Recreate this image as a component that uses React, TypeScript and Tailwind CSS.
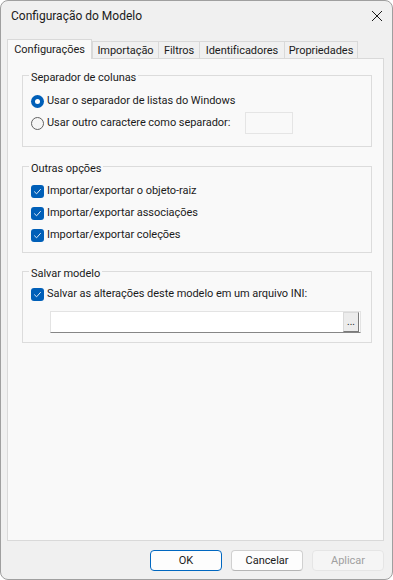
import React from "react";

type Tab = { label: string; width: string; active?: boolean };

const tabs: Tab[] = [
  { label: "Configurações", width: "w-[85px]", active: true },
  { label: "Importação", width: "w-[67px]" },
  { label: "Filtros", width: "w-[42px]" },
  { label: "Identificadores", width: "w-[86px]" },
  { label: "Propriedades", width: "w-[74px]" },
];

function Radio({ checked }: { checked?: boolean }) {
  if (checked) {
    return (
      <span className="flex h-[13px] w-[13px] shrink-0 items-center justify-center rounded-full bg-[#005fb8]">
        <span className="h-[5px] w-[5px] rounded-full bg-white" />
      </span>
    );
  }
  return <span className="h-[13px] w-[13px] shrink-0 rounded-full border border-[#626262] bg-[#f5f5f5]" />;
}

function Check() {
  return (
    <span className="flex h-[13px] w-[13px] shrink-0 items-center justify-center rounded-[3px] bg-[#005fb8]">
      <svg width="9" height="9" viewBox="0 0 9 9" fill="none">
        <path d="M1.5 4.8 L3.6 6.8 L7.5 2.4" stroke="#dbe9f7" strokeWidth="1" strokeLinecap="round" strokeLinejoin="round" />
      </svg>
    </span>
  );
}

function Group({ title, className, children }: { title: string; className: string; children: React.ReactNode }) {
  return (
    <fieldset className={`border border-[#dcdcdc] px-[8px] ${className}`}>
      <legend className="ml-[-2px] px-[2px] pt-[5px] leading-[16px]">{title}</legend>
      {children}
    </fieldset>
  );
}

export default function App() {
  return (
    <div
      className="flex h-[580px] w-[393px] flex-col overflow-hidden rounded-[8px] border border-[#9f9f9f] bg-[#f0f0f0] text-[11px] leading-[16px] tracking-[-0.05px] text-[#1b1b1b]"
      style={{ fontFamily: "Roboto, 'Noto Sans', sans-serif" }}
    >
      <div className="flex h-[30px] shrink-0 items-center justify-between pl-[10px] pr-[9px]">
        <span className="text-[12px] tracking-normal">Configuração do Modelo</span>
        <svg width="12" height="12" viewBox="0 0 12 12">
          <path d="M1 1 L11 11 M11 1 L1 11" stroke="#1b1b1b" strokeWidth="1" />
        </svg>
      </div>

      <div className="flex flex-1 flex-col pl-[6px] pr-[8px] pt-[8px]">
        <div className="flex h-[19px] items-end">
          {tabs.map((t, i) =>
            t.active ? (
              <div
                key={t.label}
                className={`relative z-10 mb-[-1px] flex h-[20px] items-start justify-center whitespace-nowrap border border-b-0 border-[#d9d9d9] bg-[#f9f9f9] pt-[2px] ${t.width}`}
              >
                {t.label}
              </div>
            ) : (
              <div
                key={t.label}
                className={`flex h-[17px] items-center justify-center whitespace-nowrap border border-b-0 border-[#d9d9d9] bg-[#f0f0f0] pt-[1px] ${i > 1 ? "ml-[-1px]" : ""} ${t.width}`}
              >
                {t.label}
              </div>
            )
          )}
        </div>

        <div className="flex h-[483px] flex-col border border-[#d9d9d9] bg-[#f9f9f9] pl-[14px] pr-[11px] pt-[6px]">
          <Group title="Separador de colunas" className="pb-[12px]">
            <div className="pt-[4px]">
              <div className="flex h-[22px] items-center gap-[3px]">
                <Radio checked />
                <span>Usar o separador de listas do Windows</span>
              </div>
              <div className="flex h-[22px] items-center">
                <Radio />
                <span className="ml-[3px] w-[198px] whitespace-nowrap">Usar outro caractere como separador:</span>
                <div className="h-[22px] w-[48px] border border-[#e5e5e5] bg-[#f9f9f9]" />
              </div>
            </div>
          </Group>

          <Group title="Outras opções" className="mt-[9px] pb-[6px]">
            <div className="pt-[3px]">
              {["Importar/exportar o objeto-raiz", "Importar/exportar associações", "Importar/exportar coleções"].map((l) => (
                <div key={l} className="flex h-[22px] items-center gap-[3px]">
                  <Check />
                  <span>{l}</span>
                </div>
              ))}
            </div>
          </Group>

          <Group title="Salvar modelo" className="mt-[8px] pb-[9px]">
            <div className="pt-[1px]">
              <div className="flex h-[22px] items-center gap-[3px]">
                <Check />
                <span>Salvar as alterações deste modelo em um arquivo INI:</span>
              </div>
              <div className="ml-[19px] mt-[6px] flex h-[22px] w-[311px] items-center justify-end border border-[#e3e3e3] border-b-[#868686] bg-white pr-[1px]">
                <div className="flex h-[20px] w-[16px] items-center justify-center border border-[#dadada] border-b-[#7a7a7a] border-r-[#7a7a7a] bg-[#ececec] text-[10px] leading-[10px]">
                  ...
                </div>
              </div>
            </div>
          </Group>
        </div>

        <div className="flex justify-end gap-[9px] pt-[9px]">
          <button className="h-[21px] w-[72px] rounded-[4px] border border-[#0067c0] bg-[#fdfdfd] leading-[16px]">OK</button>
          <button className="h-[21px] w-[72px] rounded-[4px] border border-[#d0d0d0] border-b-[#b5b5b5] bg-[#fdfdfd] leading-[16px]">Cancelar</button>
          <button className="h-[21px] w-[72px] rounded-[4px] border border-[#e5e5e5] bg-[#f5f5f5] leading-[16px] text-[#a0a0a0]">Aplicar</button>
        </div>
      </div>
    </div>
  );
}
